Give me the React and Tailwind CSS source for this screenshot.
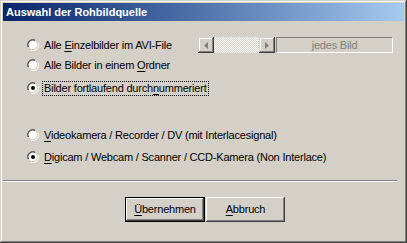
import React from "react";

function Radio({ checked }) {
  return (
    <svg width="12" height="12" viewBox="0 0 12 12" className="shrink-0">
      <path d="M0.5 8 A6 6 0 0 1 8 0.5" fill="none" stroke="#808080" strokeWidth="1" />
      <path d="M1.5 8 A4.8 4.8 0 0 1 8 1.5" fill="none" stroke="#404040" strokeWidth="1" />
      <circle cx="6" cy="6" r="4.3" fill="#fff" />
      <path d="M3.6 10.6 A6 6 0 0 0 10.6 3.6" fill="none" stroke="#d4d0c8" strokeWidth="1" />
      <path d="M4 11.5 A6 6 0 0 0 11.5 4" fill="none" stroke="#fff" strokeWidth="1" />
      {checked && <circle cx="6" cy="6" r="2" fill="#000" />}
    </svg>
  );
}

function Row({ checked, focus, children, className = "" }) {
  return (
    <div className={"flex items-center h-[16px] pl-[24px] " + className}>
      <Radio checked={checked} />
      <span
        className={
          "ml-[3px] px-[1px] leading-[13px] border " +
          (focus ? "border-dotted border-black" : "border-transparent")
        }
      >
        {children}
      </span>
    </div>
  );
}

const U = ({ children }) => <span className="underline underline-offset-[2px]">{children}</span>;

export default function App() {
  return (
    <div
      className="w-[407px] h-[243px] bg-[#d4d0c8] p-[3px] flex flex-col text-[11px] tracking-[-0.2px] text-black shadow-[inset_-1px_-1px_#404040,inset_1px_1px_#d4d0c8,inset_-2px_-2px_#808080,inset_2px_2px_#fff]"
      style={{ fontFamily: '"Liberation Sans", Arial, sans-serif' }}
    >
      <div className="h-[18px] shrink-0 bg-gradient-to-r from-[#0a246a] to-[#a6caf0] text-white font-bold text-[11px] tracking-normal flex items-center pl-[3px]">
        Auswahl der Rohbildquelle
      </div>

      <div className="flex items-center mt-[16px] h-[16px]">
        <Row>
          Alle <U>E</U>inzelbilder im AVI-File
        </Row>
        <div className="ml-auto mr-[11px] flex h-[16px]">
          <div className="flex w-[77px] h-[16px]">
            <div className="w-[16px] h-[16px] bg-[#d4d0c8] shadow-[inset_-1px_-1px_#404040,inset_1px_1px_#d4d0c8,inset_-2px_-2px_#808080,inset_2px_2px_#fff] flex items-center justify-center">
              <svg width="4" height="7" viewBox="0 0 4 7"><path d="M4 0 L0 3.5 L4 7 Z" fill="#808080" /></svg>
            </div>
            <div className="flex-1 bg-[repeating-conic-gradient(#fff_0_25%,#d4d0c8_0_50%)] bg-[length:2px_2px]" />
            <div className="w-[16px] h-[16px] bg-[#d4d0c8] shadow-[inset_-1px_-1px_#404040,inset_1px_1px_#d4d0c8,inset_-2px_-2px_#808080,inset_2px_2px_#fff] flex items-center justify-center">
              <svg width="4" height="7" viewBox="0 0 4 7"><path d="M0 0 L4 3.5 L0 7 Z" fill="#808080" /></svg>
            </div>
          </div>
          <div className="ml-[1px] w-[117px] h-[16px] border border-t-[#808080] border-l-[#808080] border-b-white border-r-white flex items-center justify-center text-[#808080]">
            jedes Bild
          </div>
        </div>
      </div>

      <Row className="mt-[4px]">
        Alle Bilder in einem <U>O</U>rdner
      </Row>
      <Row checked focus className="mt-[7px]">
        Bilder fortlaufend durch<U>n</U>ummeriert
      </Row>

      <Row className="mt-[31px]">
        <U>V</U>ideokamera / Recorder / DV (mit Interlacesignal)
      </Row>
      <Row checked className="mt-[6px]">
        <U>D</U>igicam / Webcam / Scanner / CCD-Kamera (Non Interlace)
      </Row>

      <div className="mt-[15px] mx-0 mr-[7px] h-[2px] border-t border-t-[#808080] border-b border-b-white" />

      <div className="mt-[15px] flex justify-center pl-[3px] gap-[1px]">
        <div className="w-[80px] h-[25px] border border-black">
          <div className="w-full h-full flex items-center justify-center shadow-[inset_-1px_-1px_#404040,inset_1px_1px_#fff,inset_-2px_-2px_#808080]">
            <span><U>Ü</U>bernehmen</span>
          </div>
        </div>
        <div className="w-[79px] h-[25px] flex items-center justify-center shadow-[inset_-1px_-1px_#404040,inset_1px_1px_#fff,inset_-2px_-2px_#808080]">
          <span><U>A</U>bbruch</span>
        </div>
      </div>
    </div>
  );
}
